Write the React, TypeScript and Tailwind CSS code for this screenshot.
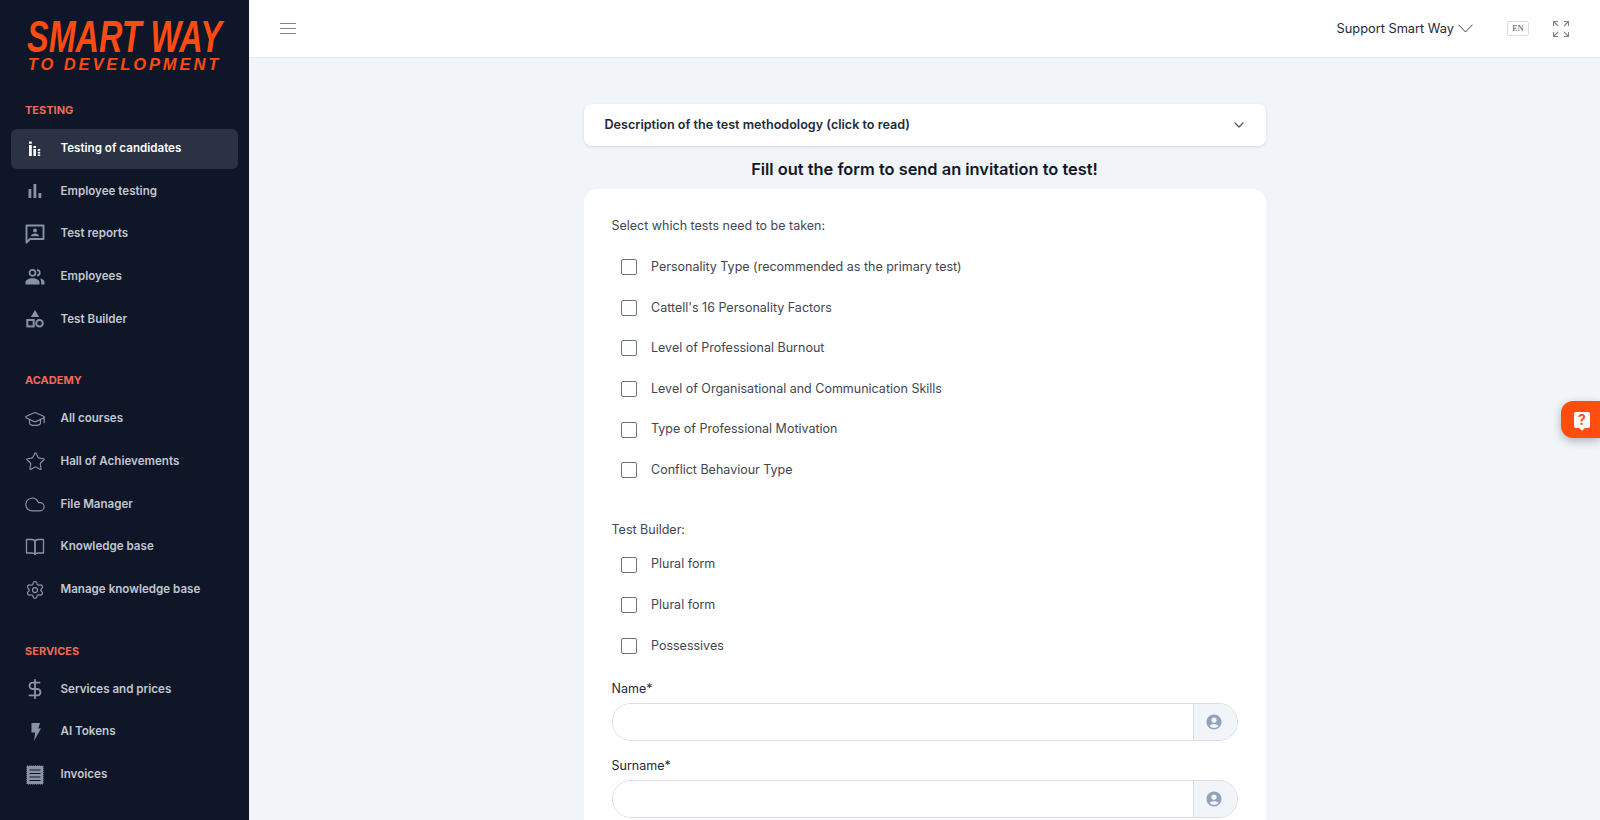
import { ChevronDown, DollarSign, Settings, Cloud, Star, GraduationCap } from 'lucide-react';
import { MdAccountCircle } from 'react-icons/md';
import type { ReactNode } from 'react';

const CandidatesIcon = () => (
  <svg width="18" height="18" viewBox="0 0 18 18" fill="#fff">
    <rect x="3" y="1.500" width="2.800" height="2.300" />
    <rect x="3" y="5" width="2.800" height="11" />
    <rect x="7.400" y="6" width="2.600" height="2" />
    <rect x="7.400" y="9" width="2.600" height="7" />
    <rect x="11.800" y="9" width="2.400" height="1.800" />
    <rect x="11.800" y="11.800" width="2.400" height="1.800" />
    <rect x="11.800" y="14.400" width="2.400" height="1.600" />
  </svg>
);

const BarsIcon = () => (
  <svg width="18" height="18" viewBox="0 0 18 18" fill="#8a93a3">
    <rect x="2.500" y="7" width="2.800" height="9" />
    <rect x="7.500" y="2" width="2.800" height="14" />
    <rect x="12.500" y="11" width="2.800" height="5" />
  </svg>
);

const ReportIcon = () => (
  <svg width="20" height="20" viewBox="0 0 20 20" fill="none" stroke="#8a93a3" strokeWidth="1.900">
    <path d="M1.500 1.500h17v13.500H5l-3.500 3.500z" strokeLinejoin="round" />
    <circle cx="10" cy="6.500" r="1.900" fill="#8a93a3" stroke="none" />
    <path d="M5.800 12.300c.4-2 2.200-2.800 4.200-2.800s3.800.8 4.200 2.800z" fill="#8a93a3" stroke="none" />
  </svg>
);

const GroupIcon = () => (
  <svg width="20" height="18" viewBox="0 0 20 18" fill="none" stroke="#8a93a3" strokeWidth="1.700">
    <circle cx="7.500" cy="4.800" r="3" />
    <path d="M12 1.900c1.700.3 2.800 1.400 2.800 2.900s-1.100 2.600-2.800 2.900" />
    <path d="M0.500 16.500v-2.300c0-2.300 3.200-4 7-4s7 1.700 7 4v2.300z" fill="#8a93a3" stroke="none" />
    <path d="M15 10.400c2.700.4 4.500 1.800 4.500 3.800v2.300h-3.300v-2.300c0-1.500-.5-2.800-1.200-3.800z" fill="#8a93a3" stroke="none" />
  </svg>
);

const BuilderIcon = () => (
  <svg width="20" height="20" viewBox="0 0 20 20" fill="none" stroke="#8a93a3" strokeWidth="2">
    <path d="M10 1l4.200 7H5.800z" fill="#8a93a3" stroke="none" />
    <rect x="2.300" y="11" width="6.400" height="6.400" />
    <circle cx="14.500" cy="14.200" r="3.300" />
  </svg>
);

const BookIcon = () => (
  <svg width="20" height="18" viewBox="0 0 20 18" fill="none" stroke="#8a93a3" strokeWidth="1.300" strokeLinejoin="round">
    <path d="M1.500 1.500h5.300c1.800 0 3.200 1 3.200 2.500v12.500c-.6-1-1.700-1.500-3-1.500H1.500z" />
    <path d="M18.500 1.500h-5.300c-1.800 0-3.200 1-3.200 2.500v12.500c.6-1 1.700-1.500 3-1.500h5.500z" />
  </svg>
);

const BoltIcon = () => (
  <svg width="11" height="18" viewBox="0 0 11 18" fill="#8a93a3">
    <path d="M1.500 0h8.500L8.300 5.500H11L4 18l1.200-8.500H1.500z" />
  </svg>
);

const InvoiceIcon = () => (
  <svg width="18" height="20" viewBox="0 0 18 20" fill="#8a93a3">
    <rect x="1" y="1" width="16" height="18" stroke="#8a93a3" strokeWidth="1.200" strokeDasharray="1.200 0.800" />
    <path d="M3.500 5h11M3.500 8.500h11M3.500 12h11M3.500 15.500h11" stroke="#0e1628" strokeWidth="1.100" />
  </svg>
);

const ExpandIcon = () => (
  <svg width="18" height="18" viewBox="0 0 18 18" fill="none" stroke="#7c8594" strokeWidth="1.100">
    <path d="M1.500 6V1.500H6M1.500 1.500l4.500 4.500" />
    <path d="M16.500 6V1.500H12M16.500 1.500L12 6" />
    <path d="M1.500 12v4.500H6M1.500 16.500L6 12" />
    <path d="M16.500 12v4.500H12M16.500 16.500L12 12" />
  </svg>
);

type NavItem = { label: string; icon: ReactNode; active?: boolean };

const sections: { title: string; items: NavItem[] }[] = [
  {
    title: 'TESTING',
    items: [
      { label: 'Testing of candidates', icon: <CandidatesIcon />, active: true },
      { label: 'Employee testing', icon: <BarsIcon /> },
      { label: 'Test reports', icon: <ReportIcon /> },
      { label: 'Employees', icon: <GroupIcon /> },
      { label: 'Test Builder', icon: <BuilderIcon /> },
    ],
  },
  {
    title: 'ACADEMY',
    items: [
      { label: 'All courses', icon: <GraduationCap size={22} color="#8a93a3" strokeWidth={1.300} /> },
      { label: 'Hall of Achievements', icon: <Star size={21} color="#8a93a3" strokeWidth={1.300} /> },
      { label: 'File Manager', icon: <Cloud size={23} color="#8a93a3" strokeWidth={1.200} /> },
      { label: 'Knowledge base', icon: <BookIcon /> },
      { label: 'Manage knowledge base', icon: <Settings size={20} color="#8a93a3" strokeWidth={1.500} /> },
    ],
  },
  {
    title: 'SERVICES',
    items: [
      { label: 'Services and prices', icon: <DollarSign size={22} color="#8a93a3" strokeWidth={2} /> },
      { label: 'AI Tokens', icon: <BoltIcon /> },
      { label: 'Invoices', icon: <InvoiceIcon /> },
    ],
  },
];

const mainTests = [
  'Personality Type (recommended as the primary test)',
  "Cattell's 16 Personality Factors",
  'Level of Professional Burnout',
  'Level of Organisational and Communication Skills',
  'Type of Professional Motivation',
  'Conflict Behaviour Type',
];

const builderTests = ['Plural form', 'Plural form', 'Possessives'];

const CheckRow = ({ label }: { label: string }) => (
  <label className="flex h-[40.600px] items-center pl-[9.500px]">
    <span className="h-4 w-4 rounded-[2px] border-[1.500px] border-[#6b7280] bg-white" />
    <span className="ml-[14px] text-[12.500px] text-[#3f4652]">{label}</span>
  </label>
);

const TextField = ({ label }: { label: string }) => (
  <div>
    <div className="mb-[5px] text-[12.500px] leading-[18px] text-[#1f2937]">{label}</div>
    <div className="flex h-[38px] overflow-hidden rounded-full border border-[#d9dee6] bg-white">
      <input className="min-w-0 flex-1 bg-white outline-none" />
      <span className="flex w-[44px] items-center justify-center border-l border-[#d9dee6] bg-[#f1f5f9] pr-[2px]">
        <MdAccountCircle size={18} color="#94a3b8" />
      </span>
    </div>
  </div>
);

export default function App() {
  return (
    <div className="relative flex h-[820px] w-full overflow-hidden bg-[#f1f5f9] font-['Inter',sans-serif]">
      <aside className="flex w-[249px] shrink-0 flex-col bg-[#0e1628]">
        <div className="flex h-[83px] flex-col items-center pt-[18px] font-['Liberation_Sans',sans-serif] text-[#ff4a12] italic">
          <div className="scale-x-[0.735] text-[44px] leading-[37px] font-bold whitespace-nowrap">SMART WAY</div>
          <div className="text-[16.500px] leading-[18px] font-bold tracking-[2.900px] whitespace-nowrap">TO DEVELOPMENT</div>
        </div>
        <nav className="flex flex-col">
          {sections.map((section) => (
            <div key={section.title} className="mt-[19px] mb-[11px]">
              <div className="mb-[11px] pl-[25px] text-[11px] leading-[16px] font-bold text-[#f4685a]">
                {section.title}
              </div>
              {section.items.map((item) => (
                <div
                  key={item.label}
                  className={
                    item.active
                      ? 'mx-[11px] mb-[3px] flex h-[39.670px] items-center rounded-md bg-[#2a3244] pl-[13px] text-white'
                      : 'mx-[11px] mb-[3px] flex h-[39.670px] items-center rounded-md pl-[13px] text-[#c2c7cf]'
                  }
                >
                  <span className="flex w-[22px] justify-center">{item.icon}</span>
                  <span className="ml-[14.500px] text-[11.600px] font-semibold whitespace-nowrap">{item.label}</span>
                </div>
              ))}
            </div>
          ))}
        </nav>
      </aside>

      <div className="flex min-w-0 flex-1 flex-col">
        <header className="flex h-[58px] shrink-0 items-center border-b border-[#e2e8f0] bg-white pr-[30px] pl-[31px]">
          <div className="flex w-4 flex-col gap-[3.500px]">
            <span className="h-[1.500px] bg-[#7c8594]" />
            <span className="h-[1.500px] bg-[#7c8594]" />
            <span className="h-[1.500px] bg-[#7c8594]" />
          </div>
          <div className="ml-auto flex items-center">
            <span className="text-[12.800px] text-[#1f2937]">Support Smart Way</span>
            <svg width="15" height="9" viewBox="0 0 15 9" fill="none" stroke="#374151" strokeWidth="1" className="ml-[4px]">
              <path d="M.5.700L7.500 8l7-7.300" />
            </svg>
            <span className="ml-[34px] flex h-[15px] w-[22px] items-center justify-center rounded-[2px] border border-[#d9dee6] font-['Liberation_Serif',serif] text-[8.500px] text-[#4b5563]">
              EN
            </span>
            <span className="ml-[23px] flex">
              <ExpandIcon />
            </span>
          </div>
        </header>

        <main className="flex min-h-0 flex-1 flex-col items-center pt-[46px]">
          <div className="w-[682px]">
            <div className="flex h-[42px] items-center justify-between rounded-lg bg-white pr-[19px] pl-[21px] shadow-[0_1px_3px_rgba(15,23,42,0.12)]">
              <span className="text-[12.600px] font-semibold text-[#1f2937]">
                Description of the test methodology (click to read)
              </span>
              <ChevronDown size={16} color="#4b5563" strokeWidth={1.800} />
            </div>
            <h1 className="mt-[12px] mb-[9px] text-center text-[16.400px] leading-[22px] font-semibold text-[#111827]">
              Fill out the form to send an invitation to test!
            </h1>
            <div className="rounded-t-[14px] bg-white px-[28px] pt-[28px] pb-4">
              <p className="mb-[12px] text-[12.500px] leading-[18px] text-[#3f4652]">Select which tests need to be taken:</p>
              {mainTests.map((t) => (
                <CheckRow key={t} label={t} />
              ))}
              <p className="mt-[30px] mb-[6px] text-[12.500px] leading-[18px] text-[#3f4652]">Test Builder:</p>
              {builderTests.map((t, i) => (
                <CheckRow key={i} label={t} />
              ))}
              <div className="mt-[14px] flex flex-col gap-[15.500px]">
                <TextField label="Name*" />
                <TextField label="Surname*" />
              </div>
            </div>
          </div>
        </main>
      </div>

      <button className="absolute top-[401px] right-0 flex h-[37px] w-[39px] items-center rounded-l-[12px] bg-[#ff4d0d] pl-[13px] shadow-[0_3px_8px_rgba(15,23,42,0.3)]">
        <span className="relative flex h-[16px] w-[16px] items-center justify-center rounded-[2px] bg-white text-[14px] leading-none font-bold text-[#ff4d0d]">
          ?
          <span className="absolute -bottom-[2px] left-[6px] h-[4px] w-[4px] rotate-45 bg-white" />
        </span>
      </button>
    </div>
  );
}
